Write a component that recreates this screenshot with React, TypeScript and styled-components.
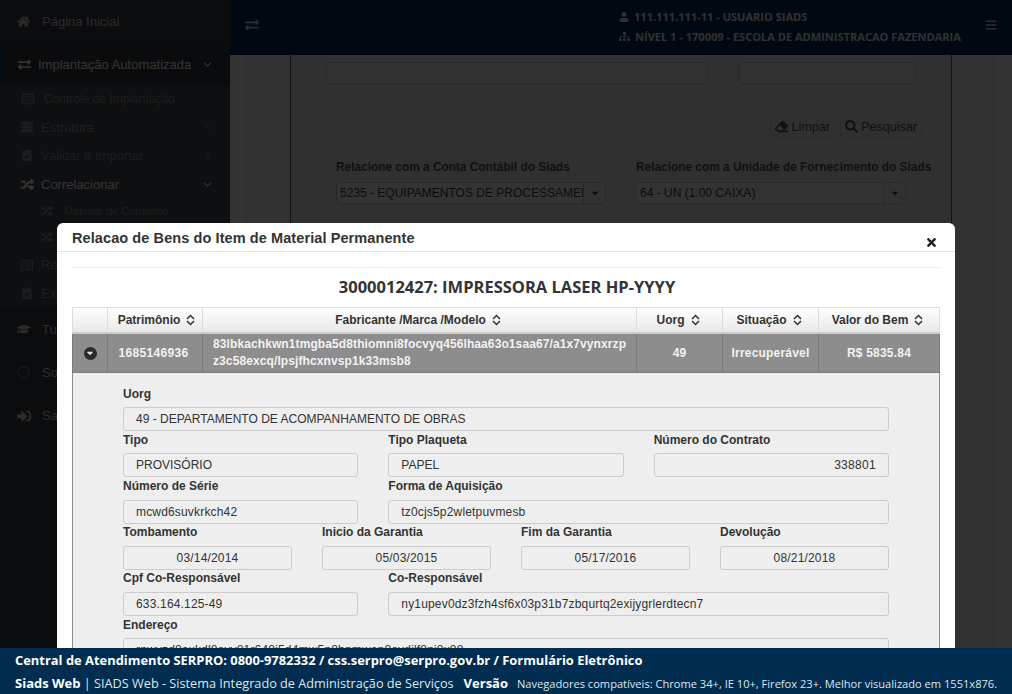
import React from 'react';
import styled, { createGlobalStyle } from 'styled-components';
import { ChevronDown, ChevronLeft } from 'lucide-react';
import {
  FaHome, FaExchangeAlt, FaRegListAlt, FaServer, FaClipboardCheck, FaRandom, FaGraduationCap,
  FaRegCircle, FaSignInAlt, FaUser, FaSitemap, FaBars, FaEraser, FaSearch, FaTimes, FaCaretDown,
} from 'react-icons/fa';

const Global = createGlobalStyle`
  html, body { margin: 0; padding: 0; background: #333; }
  body { font-family: "Liberation Sans", Arial, sans-serif; }
  * { box-sizing: border-box; }
`;

const Page = styled.div`
  width: 1012px; height: 694px; display: flex; flex-direction: column; overflow: hidden;
`;
const Stage = styled.div`
  position: relative; flex: 1; min-height: 0; overflow: hidden; display: flex; background: #fff;
`;
const Sidebar = styled.nav`
  width: 230px; flex: none; background: #3a3f45; color: #fff;
`;
const SubMenu = styled.div`
  background: #454d54;
`;
const NavItem = styled.div<{ $h: number; $indent: number; $level?: 'top' | 'sub'; $on?: boolean; $fs?: number; $pt?: number }>`
  height: ${p => p.$h}px; display: flex; align-items: center; padding: ${p => p.$pt ?? 0}px 16px 0 ${p => p.$indent}px;
  font-size: ${p => p.$fs ?? 13}px; white-space: nowrap;
  color: ${p => (p.$on ? '#ffffff' : p.$level === 'top' ? '#d8d8d8' : '#88969c')};
  background: ${p => (p.$level === 'top' && p.$on ? '#32373c' : 'transparent')};
  box-shadow: ${p => (p.$level === 'top' && p.$on ? 'inset 3px 0 0 #0b3f66' : 'none')};
`;
const NavIcon = styled.span<{ $w: number; $color?: string }>`
  width: ${p => p.$w}px; flex: none; display: inline-flex; align-items: center; color: ${p => p.$color ?? 'inherit'};
`;
const NavArrow = styled.span`
  margin-left: auto; display: inline-flex;
`;
const Main = styled.div`
  flex: 1; min-width: 0; display: flex; flex-direction: column; background: #fff;
`;
const TopBar = styled.header`
  height: 55px; flex: none; background: #02305a; color: #fff; display: flex; align-items: center; padding: 0 15px;
`;
const TopIcon = styled.span<{ $auto?: boolean }>`
  display: inline-flex; margin-bottom: 5px; margin-left: ${p => (p.$auto ? 'auto' : '0')}; color: #dddddd;
`;
const UserBlock = styled.div`
  margin-left: 360px; font-family: "Open Sans", sans-serif; font-weight: 700; font-size: 11.05px; line-height: 20px; padding-bottom: 2px;
`;
const UserLine = styled.div`
  display: flex; align-items: center; gap: 5px; white-space: nowrap; color: #eee;
`;
const Workspace = styled.main`
  flex: 1; display: flex; padding: 0 15px; background: #fff;
`;
const Column = styled.div`
  width: 752px; padding: 0 45px; background: #f4f4f4;
`;
const Panel = styled.section`
  height: 100%; border: 1px solid #666; border-top: 0; background: #ededed; padding: 7px 35px 0 35px; color: #333;
`;
const PanelRow = styled.div`
  display: flex; gap: 31px;
`;
const BlankInput = styled.div<{ $w: number }>`
  width: ${p => p.$w}px; height: 22px; border: 1px solid #ccc; border-radius: 3px; background: #fafafa;
`;
const Buttons = styled.div`
  display: flex; justify-content: flex-end; gap: 5px; margin: 32px -6px 0 0;
`;
const FilterButton = styled.span`
  height: 21px; padding: 0 4px; display: inline-flex; align-items: center; gap: 3px; border: 1px solid #ddd; border-radius: 3px; font-size: 12.6px; color: #555;
`;
const Selects = styled.div`
  display: flex; gap: 30px; margin: 23px 0 0 10px;
`;
const SelectGroup = styled.div<{ $w: number }>`
  width: ${p => p.$w}px; font-size: 11.87px;
`;
const SelectLabel = styled.div`
  font-weight: 700; height: 16px; white-space: nowrap; color: #555;
`;
const SelectBox = styled.div`
  margin-top: 6px; height: 22px; border: 1px solid #ccc; border-radius: 3px; background: #fff; display: flex; align-items: center; padding-left: 3px; overflow: hidden; font-size: 12px; color: #444; white-space: nowrap;
`;
const SelectText = styled.span`
  flex: 1; overflow: hidden;
`;
const SelectCaret = styled.span`
  width: 22px; height: 100%; flex: none; display: flex; align-items: center; justify-content: center; border-left: 1px solid #ccc; background: #f3f3f3;
`;
const Backdrop = styled.div`
  position: absolute; inset: 0; background: rgba(0, 0, 0, .8);
`;
const Modal = styled.div`
  position: absolute; left: 57px; top: 223px; width: 898px; background: #fff; border-radius: 6px 6px 0 0; color: #333;
`;
const ModalHead = styled.div`
  height: 29px; border-bottom: 1px solid #e5e5e5; padding: 7px 15px 0; display: flex; justify-content: space-between;
`;
const ModalTitle = styled.h4`
  margin: 0; font-size: 14.5px; font-weight: 700; line-height: 17px; letter-spacing: .09px;
`;
const CloseButton = styled.span`
  display: inline-flex; margin: 6px 2px 0 0; color: #222;
`;
const ModalBody = styled.div`
  padding: 15px;
`;
const Rule = styled.hr`
  border: 0; border-top: 1px solid #eee; margin: 0;
`;
const ItemTitle = styled.h3`
  margin: 0; height: 39px; padding: 9px 0 0 2px; text-align: center; font-family: "Open Sans", sans-serif; font-weight: 700; font-size: 16.5px; line-height: 20px; color: #333;
`;
const Table = styled.table`
  width: 868px; border-collapse: separate; border-spacing: 0; table-layout: fixed; font-size: 12px;
`;
const Col = styled.col<{ $w: number }>`
  width: ${p => p.$w}px;
`;
const Th = styled.th<{ $lead?: number }>`
  height: 27px; padding: 0 3px 0 ${p => p.$lead ?? 0}px; font-weight: 700; text-align: center; color: #333;
  border: solid #ddd; border-width: 1px 0 2px 1px; border-bottom-color: #ccc;
  background: linear-gradient(#ffffff, #e8e8e8); white-space: nowrap;
  &:last-child { border-right-width: 1px; }
`;
const SortSvg = styled.svg`
  width: 9px; height: 12px; vertical-align: -2px; margin-left: 6px; fill: none; stroke: currentColor; stroke-width: 1.5;
`;
const Td = styled.td<{ $left?: boolean; $ls?: number; $trail?: number }>`
  height: 39px; padding: ${p => (p.$left ? '0 6px 0 10px' : `0 ${p.$trail ?? 0}px 0 0`)}; background: #8d8d8d; color: #f2f2f2; font-weight: 700; line-height: 17px; letter-spacing: ${p => p.$ls ?? 0.15}px;
  text-align: ${p => (p.$left ? 'left' : 'center')}; border: solid #7b7b7b; border-width: 0 0 1px 1px; word-break: break-all;
  &:last-child { border-right-width: 1px; }
`;
const RowToggle = styled.span`
  width: 13px; height: 13px; border-radius: 50%; background: #2b2b2b; color: #ddd; display: inline-flex; align-items: center; justify-content: center; vertical-align: middle;
`;
const Details = styled.div`
  width: 868px; height: 330px; background: #eeeeee; border: 1px solid #8d8d8d; border-top: 0; padding: 13.6px 50px 0;
`;
const FieldRow = styled.div<{ $cols: string }>`
  display: grid; grid-template-columns: ${p => p.$cols}; column-gap: 30px; margin-bottom: 1.5px;
`;
const Field = styled.div<{ $span?: number }>`
  grid-column: span ${p => p.$span ?? 1}; min-width: 0;
`;
const FieldLabel = styled.div`
  height: 14px; line-height: 14px; margin-bottom: 6.7px; font-size: 12px; font-weight: 700; color: #333; white-space: nowrap;
`;
const FieldValue = styled.div<{ $align?: string; $ls?: number }>`
  height: 24px; line-height: 23px; padding: 0 12px; border: 1px solid #ccc; border-radius: 3px; background: #eeeeee; font-size: 12px; letter-spacing: ${p => p.$ls ?? 0.17}px; color: #333; white-space: nowrap; overflow: hidden;
  text-align: ${p => p.$align ?? 'left'};
`;
const Footer = styled.footer`
  height: 46px; flex: none; background: #002d50; color: #fff; font-family: "Open Sans", sans-serif; padding: 4px 15px 0;
`;
const FooterTop = styled.div`
  font-weight: 700; font-size: 12.92px; line-height: 17px; white-space: nowrap;
`;
const FooterBottom = styled.div`
  display: flex; align-items: baseline; margin-top: 6px; font-size: 12.7px; line-height: 17px; white-space: nowrap; color: #dfe6ec;
`;
const Strong = styled.b`
  color: #fff; font-weight: 700; font-size: 13px;
`;
const Version = styled(Strong)`
  margin: 0 9px 0 10px;
`;
const Small = styled.span`
  font-size: 11.1px; color: #dfe6ec;
`;

const fields: { cols: string; items: { label: string; value: string; span?: number; align?: string; ls?: number }[] }[] = [
  { cols: '1fr', items: [{ label: 'Uorg', value: '49 - DEPARTAMENTO DE ACOMPANHAMENTO DE OBRAS', ls: 0 }] },
  { cols: '1fr 1fr 1fr', items: [
    { label: 'Tipo', value: 'PROVISÓRIO', ls: 0 }, { label: 'Tipo Plaqueta', value: 'PAPEL', ls: 0 },
    { label: 'Número do Contrato', value: '338801', align: 'right', ls: 0.3 },
  ] },
  { cols: '1fr 1fr 1fr', items: [
    { label: 'Número de Série', value: 'mcwd6suvkrkch42' },
    { label: 'Forma de Aquisição', value: 'tz0cjs5p2wletpuvmesb', span: 2 },
  ] },
  { cols: '1fr 1fr 1fr 1fr', items: [
    { label: 'Tombamento', value: '03/14/2014', align: 'center' }, { label: 'Inicio da Garantia', value: '05/03/2015', align: 'center' },
    { label: 'Fim da Garantia', value: '05/17/2016', align: 'center' }, { label: 'Devolução', value: '08/21/2018', align: 'center' },
  ] },
  { cols: '1fr 1fr 1fr', items: [
    { label: 'Cpf Co-Responsável', value: '633.164.125-49' },
    { label: 'Co-Responsável', value: 'ny1upev0dz3fzh4sf6x03p31b7zbqurtq2exijygrlerdtecn7', span: 2 },
  ] },
  { cols: '1fr', items: [{ label: 'Endereço', value: 'rnwvzd8axkdl8ovv81r648j5d4mw5n8bnmwon8ovdjlf8ni8x88' }] },
];

const Sort = () => (
  <SortSvg viewBox="0 0 9 12">
    <path d="M1 5 4.5 1.5 8 5" />
    <path d="M1 7 4.5 10.5 8 7" />
  </SortSvg>
);

export default function App() {
  return (
    <Page>
      <Global />
      <Stage>
        <Sidebar>
          <NavItem $h={43} $indent={17} $level="top"><NavIcon $w={25}><FaHome size={13} /></NavIcon>Página Inicial</NavItem>
          <NavItem $h={42} $indent={18} $level="top" $on><NavIcon $w={20}><FaExchangeAlt size={13} /></NavIcon>Implantação Automatizada<NavArrow><ChevronDown size={13} /></NavArrow></NavItem>
          <SubMenu>
            <NavItem $h={28} $indent={22} $fs={12}><NavIcon $w={22}><FaRegListAlt size={12} /></NavIcon>Controle de Implantação</NavItem>
            <NavItem $h={28} $indent={21}><NavIcon $w={20}><FaServer size={12} /></NavIcon>Estrutura<NavArrow><ChevronLeft size={12} /></NavArrow></NavItem>
            <NavItem $h={28} $indent={21}><NavIcon $w={20}><FaClipboardCheck size={12} /></NavIcon>Validar e Importar<NavArrow><ChevronLeft size={12} /></NavArrow></NavItem>
            <NavItem $h={29} $indent={21} $pt={2} $on><NavIcon $w={20}><FaRandom size={13} /></NavIcon>Correlacionar<NavArrow><ChevronDown size={13} /></NavArrow></NavItem>
            <NavItem $h={26} $indent={41} $fs={11}><NavIcon $w={23}><FaRandom size={12} /></NavIcon>Material de Consumo</NavItem>
            <NavItem $h={26} $indent={41} $fs={11}><NavIcon $w={23}><FaRandom size={12} /></NavIcon>Material Permanente</NavItem>
            <NavItem $h={29} $indent={21}><NavIcon $w={20}><FaRegListAlt size={12} /></NavIcon>Relatórios</NavItem>
            <NavItem $h={28} $indent={21}><NavIcon $w={20}><FaClipboardCheck size={12} /></NavIcon>Exportar</NavItem>
          </SubMenu>
          <NavItem $h={44} $indent={17} $level="top"><NavIcon $w={25}><FaGraduationCap size={14} /></NavIcon>Tutorial</NavItem>
          <NavItem $h={43} $indent={17} $level="top"><NavIcon $w={25} $color="#3c8dbc"><FaRegCircle size={13} /></NavIcon>Sobre</NavItem>
          <NavItem $h={43} $indent={17} $level="top"><NavIcon $w={25}><FaSignInAlt size={14} /></NavIcon>Sair</NavItem>
        </Sidebar>
        <Main>
          <TopBar>
            <TopIcon><FaExchangeAlt size={14} /></TopIcon>
            <UserBlock>
              <UserLine><FaUser size={10} />111.111.111-11 - USUARIO SIADS</UserLine>
              <UserLine><FaSitemap size={11} />NÍVEL 1 - 170009 - ESCOLA DE ADMINISTRACAO FAZENDARIA</UserLine>
            </UserBlock>
            <TopIcon $auto><FaBars size={12} /></TopIcon>
          </TopBar>
          <Workspace>
            <Column>
              <Panel>
                <PanelRow><BlankInput $w={383} /><BlankInput $w={177} /></PanelRow>
                <Buttons>
                  <FilterButton><FaEraser size={13} />Limpar</FilterButton>
                  <FilterButton><FaSearch size={13} />Pesquisar</FilterButton>
                </Buttons>
                <Selects>
                  <SelectGroup $w={270}>
                    <SelectLabel>Relacione com a Conta Contábil do Siads</SelectLabel>
                    <SelectBox><SelectText>5235 - EQUIPAMENTOS DE PROCESSAMENTO</SelectText><SelectCaret><FaCaretDown size={10} /></SelectCaret></SelectBox>
                  </SelectGroup>
                  <SelectGroup $w={270}>
                    <SelectLabel>Relacione com a Unidade de Fornecimento do Siads</SelectLabel>
                    <SelectBox><SelectText>64 - UN (1.00 CAIXA)</SelectText><SelectCaret><FaCaretDown size={10} /></SelectCaret></SelectBox>
                  </SelectGroup>
                </Selects>
              </Panel>
            </Column>
          </Workspace>
        </Main>
        <Backdrop />
        <Modal>
          <ModalHead>
            <ModalTitle>Relacao de Bens do Item de Material Permanente</ModalTitle>
            <CloseButton><FaTimes size={13} /></CloseButton>
          </ModalHead>
          <ModalBody>
            <Rule />
            <ItemTitle>3000012427: IMPRESSORA LASER HP-YYYY</ItemTitle>
            <Table>
              <colgroup>
                <Col $w={35} /><Col $w={95} /><Col $w={434} /><Col $w={86} /><Col $w={96} /><Col $w={122} />
              </colgroup>
              <thead>
                <tr>
                  <Th />
                  <Th $lead={6}>Patrimônio<Sort /></Th>
                  <Th>Fabricante /Marca /Modelo<Sort /></Th>
                  <Th>Uorg<Sort /></Th>
                  <Th>Situação<Sort /></Th>
                  <Th>Valor do Bem<Sort /></Th>
                </tr>
              </thead>
              <tbody>
                <tr>
                  <Td><RowToggle><FaCaretDown size={10} /></RowToggle></Td>
                  <Td $ls={0.33} $trail={3}>1685146936</Td>
                  <Td $left $ls={0.1}>83lbkachkwn1tmgba5d8thiomni8focvyq456lhaa63o1saa67/a1x7vynxrzp z3c58excq/lpsjfhcxnvsp1k33msb8</Td>
                  <Td>49</Td>
                  <Td $ls={0.2}>Irrecuperável</Td>
                  <Td $ls={0.2}>R$ 5835.84</Td>
                </tr>
              </tbody>
            </Table>
            <Details>
              {fields.map((row, i) => (
                <FieldRow key={i} $cols={row.cols}>
                  {row.items.map(f => (
                    <Field key={f.label} $span={f.span}>
                      <FieldLabel>{f.label}</FieldLabel>
                      <FieldValue $align={f.align} $ls={f.ls}>{f.value}</FieldValue>
                    </Field>
                  ))}
                </FieldRow>
              ))}
            </Details>
          </ModalBody>
        </Modal>
      </Stage>
      <Footer>
        <FooterTop>Central de Atendimento SERPRO: 0800-9782332 / css.serpro@serpro.gov.br / Formulário Eletrônico</FooterTop>
        <FooterBottom>
          <Strong>Siads Web</Strong>&nbsp;| SIADS Web - Sistema Integrado de Administração de Serviços
          <Version>Versão</Version>
          <Small>Navegadores compatíveis: Chrome 34+, IE 10+, Firefox 23+. Melhor visualizado em 1551x876.</Small>
        </FooterBottom>
      </Footer>
    </Page>
  );
}
